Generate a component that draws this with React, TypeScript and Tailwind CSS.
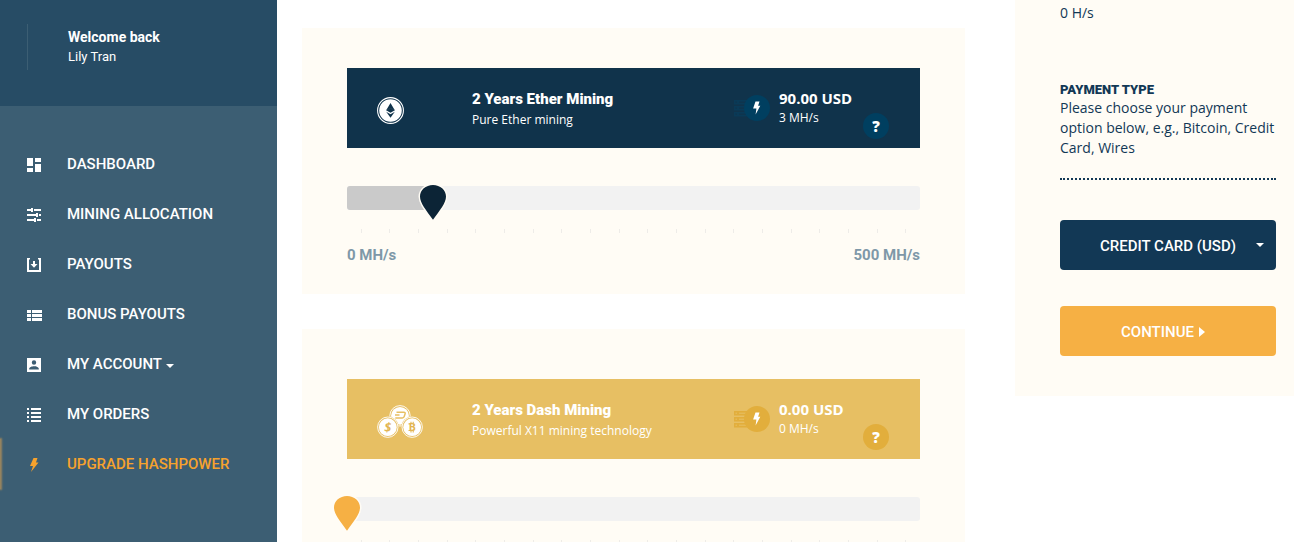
import { useState } from "react";
import type { ReactNode } from "react";

const heading = "font-['Roboto',sans-serif]";

function NavIcon({ name }: { name: string }) {
  const shapes: Record<string, ReactNode> = {
    dashboard: <path d="M0 0h6v8H0zM8 0h6v4H8zM0 10h6v4H0zM8 6h6v8H8z" />,
    tune: (
      <path d="M0 1h4V0h2v4H4V3H0zM7 1h7v2H7zM0 6h9V5h2v4H9V8H0zM12 6h2v2h-2zM0 11h7v-1h2v4H7v-1H0zM10 11h4v2h-4z" />
    ),
    payouts: <path d="M0 0h3v1L2 2v10h10V2l-1-1V0h3v14H0zM6 3h2v3h2.500L7 9.800 3.500 6H6z" />,
    bonus: <path d="M0 2h4v3H0zM5 2h10v3H5zM0 6h4v3H0zM5 6h10v3H5zM0 10h4v3H0zM5 10h10v3H5z" />,
    account: (
      <path
        fillRule="evenodd"
        d="M0 0h14v14H0zM7 2.300a2.200 2.200 0 1 0 0 4.400a2.200 2.200 0 1 0 0-4.400zM2.200 11.600h9.600v-.8C11.800 9 9 8.200 7 8.200S2.200 9 2.200 10.800z"
      />
    ),
    orders: <path d="M0 0h2v2H0zM4 0h10v2H4zM0 4h2v2H0zM4 4h10v2H4zM0 8h2v2H0zM4 8h10v2H4zM0 12h2v2H0zM4 12h10v2H4z" />,
    bolt: <path d="M6.500 0h4L9 4.500h2.500L4 14l2-6H3z" />,
  };
  return (
    <svg aria-hidden="true" viewBox="0 0 15 14" className="mt-[2px] h-[14px] w-[15px] shrink-0 fill-current">
      {shapes[name]}
    </svg>
  );
}

const navItems = [
  { icon: "dashboard", label: "DASHBOARD" },
  { icon: "tune", label: "MINING ALLOCATION" },
  { icon: "payouts", label: "PAYOUTS" },
  { icon: "bonus", label: "BONUS PAYOUTS" },
  { icon: "account", label: "MY ACCOUNT", menu: true },
  { icon: "orders", label: "MY ORDERS" },
  { icon: "bolt", label: "UPGRADE HASHPOWER", active: true },
];

function Caret({ className }: { className: string }) {
  return (
    <svg aria-hidden="true" viewBox="0 0 8 4" className={`h-1 w-2 fill-current ${className}`}>
      <path d="M0 0h8L4 4z" />
    </svg>
  );
}

function Sidebar() {
  return (
    <aside className="w-[277px] shrink-0 bg-[#3c5e73] text-white">
      <div className="h-[106px] bg-[#274c65] pl-[27px] pt-6">
        <div className={`h-[46px] border-l border-[#3c5e73] pl-10 pt-[3px] text-[13px] leading-5 ${heading}`}>
          <p className="text-sm leading-5 font-bold">Welcome back</p>
          <p>Lily Tran</p>
        </div>
      </div>
      <nav className="pt-[33px]">
        {navItems.map((item) => (
          <a
            key={item.label}
            href="#"
            className={`relative flex h-[50px] items-center pl-[27px] text-[15px] font-medium ${heading} ${
              item.active ? "text-[#f6a22d]" : "text-white"
            }`}
          >
            {item.active && (
              <span className="absolute inset-y-0 left-0 w-px bg-[#94835f] shadow-[0_0_2px_1px_#94835f]" />
            )}
            <NavIcon name={item.icon} />
            <span className="ml-[25px]">{item.label}</span>
            {item.menu && <Caret className="ml-1 mt-[3px]" />}
          </a>
        ))}
      </nav>
    </aside>
  );
}

function EtherCoin() {
  return (
    <svg aria-hidden="true" viewBox="0 0 27 27" className="h-[27px] w-[27px]">
      <circle cx="13.5" cy="13.5" r="12.900" fill="none" stroke="#fff" strokeWidth="1.100" />
      <circle cx="13.5" cy="13.5" r="11.300" fill="#fff" />
      <path d="M13.500 6l4.300 7.300-4.300 2.500-4.300-2.500zM9.200 14.800l4.300 2.500 4.300-2.500-4.300 5.900z" fill="#10334b" />
      <path d="M9.200 13.300l4.300-1.900 4.300 1.900" fill="none" stroke="#415c70" strokeWidth=".4" />
    </svg>
  );
}

function Coin({ x, y }: { x: number; y: number }) {
  return (
    <>
      <circle cx={x} cy={y} r="10.800" fill="#e7bf63" />
      <circle cx={x} cy={y} r="10.200" fill="none" stroke="#fff" strokeWidth=".900" />
      <circle cx={x} cy={y} r="8.900" fill="#fff" />
    </>
  );
}

function DashCoins() {
  return (
    <svg aria-hidden="true" viewBox="0 0 46 33" className="h-[33px] w-[46px]">
      <Coin x={23} y={10.8} />
      <path d="M19.500 7.300h7.300q1.800 0 1.300 1.600l-.9 2.700q-.4 1.300-1.900 1.300h-7M18 10h4.500" fill="none" stroke="#e7bf63" strokeWidth="1.500" />
      <Coin x={10.8} y={22.2} />
      <Coin x={35.2} y={22.2} />
      <g fill="#e2b552" fontFamily="Open Sans, sans-serif" fontWeight="700" textAnchor="middle">
        <text x="10.800" y="26.700" fontSize="12.500" fontStyle="italic">$</text>
        <text x="35.400" y="26" fontSize="10.500">B</text>
      </g>
      <path d="M34 16.800v2M36.200 16.800v2M34 25.600v2M36.200 25.600v2M31.500 18.900h2.500M31.500 25.500h2.500" stroke="#e2b552" strokeWidth="1.100" />
    </svg>
  );
}

function HashIcon({ rack, disc, ground }: { rack: string; disc: string; ground: string }) {
  return (
    <svg aria-hidden="true" viewBox="0 0 37 26" className="h-[26px] w-[37px] shrink-0">
      {[5, 11, 17].map((y) => (
        <g key={y}>
          <rect x="1" y={y} width="16" height="4.500" fill={rack} />
          <path d={`M2.500 ${y + 2.2}h1.500M6 ${y + 2.2}h8`} stroke={ground} strokeWidth="1" />
        </g>
      ))}
      <circle cx="24" cy="13" r="13" fill={disc} />
      <path d="M22.500 6.500h4l-1.400 4.300h2.200l-4.700 8.700.8-6h-3.300z" fill="#fff" />
    </svg>
  );
}

type PlanProps = {
  title: string;
  detail: string;
  price: string;
  rate: string;
  start: number;
  dark?: boolean;
};

function Plan({ title, detail, price, rate, start, dark }: PlanProps) {
  const [value, setValue] = useState(start);
  const percent = `${value / 5}%`;
  return (
    <section className={`bg-[#fffcf5] px-[45px] pb-7 ${dark ? "pt-10" : "pt-[50px]"}`}>
      <div className={`flex h-20 pl-[30px] text-white ${dark ? "bg-[#10334b]" : "bg-[#e7bf63]"}`}>
        <div className="flex w-[95px] shrink-0 items-center pt-1">{dark ? <EtherCoin /> : <DashCoins />}</div>
        <div className="min-w-0 flex-1 pt-5">
          <h2 className={`text-[15px] leading-[22px] font-black ${heading}`}>{title}</h2>
          <p className="text-xs leading-5">{detail}</p>
        </div>
        <div className="flex w-[187px] shrink-0">
          <div className="pt-[27px]">
            {dark ? (
              <HashIcon rack="#0a3a57" disc="#003f60" ground="#10334b" />
            ) : (
              <HashIcon rack="#e2ae3c" disc="#e2ae3c" ground="#e7bf63" />
            )}
          </div>
          <div className="ml-[9px] w-[84px] pt-5">
            <p className="text-[15px] leading-5 font-bold">{price}</p>
            <p className="text-xs leading-5">{rate}</p>
          </div>
          <button
            type="button"
            aria-label={`About ${title}`}
            className={`mt-[45px] h-[26px] w-[26px] rounded-full text-[15px] leading-[26px] font-extrabold ${
              dark ? "bg-[#003f60]" : "bg-[#e2ae3c]"
            }`}
          >
            ?
          </button>
        </div>
      </div>
      <div className="relative mt-[38px] h-6 rounded-[3px] bg-[#f2f2f2]">
        <div className="h-6 rounded-l-[3px] bg-[#cacaca]" style={{ width: percent }} />
        <svg
          aria-hidden="true"
          viewBox="0 0 30 38"
          className="absolute -top-[3px] h-[38px] w-[30px] -translate-x-1/2"
          style={{ left: percent }}
        >
          <path
            d="M15 2C7.800 2 2 7 2 13.500C2 20 8 27 15 36.800C22 27 28 20 28 13.500C28 7 22.200 2 15 2z"
            fill={dark ? "#0c2436" : "#f6b044"}
            stroke="#fffcf5"
            strokeWidth="3"
            paintOrder="stroke"
          />
        </svg>
        <input
          type="range"
          min={0}
          max={500}
          value={value}
          aria-label={`${title} hashpower`}
          onChange={(event) => setValue(Number(event.target.value))}
          className="absolute inset-0 h-6 w-full cursor-pointer opacity-0"
        />
      </div>
      <div className="mt-[19px] grid grid-cols-20">
        {Array.from({ length: 20 }, (_, index) => (
          <span key={index} className="h-1 w-px justify-self-center bg-[#eeece8]" />
        ))}
      </div>
      <div className={`mt-3 flex justify-between text-[15px] leading-[21px] font-bold text-[#7e98a8] ${heading}`}>
        <span>0 MH/s</span>
        <span>500 MH/s</span>
      </div>
    </section>
  );
}

function Checkout() {
  return (
    <aside className="ml-[50px] w-[279px] shrink-0 self-start bg-[#fffcf5] pr-[18px] pb-10 pl-[45px] text-sm leading-5 text-[#123855]">
      <p className="pt-[3px]">0 H/s</p>
      <h2 className={`mt-[58px] text-[13px] leading-[17px] font-black ${heading}`}>
        <label htmlFor="payment">PAYMENT TYPE</label>
      </h2>
      <p className="border-b-2 border-dotted border-[#123855] pb-5">
        Please choose your payment option below, e.g., Bitcoin, Credit Card, Wires
      </p>
      <div className="relative mt-10 text-white">
        <select
          id="payment"
          className={`block h-[50px] w-full appearance-none rounded-[4px] bg-[#123855] pt-px text-center text-[15px] font-medium [text-align-last:center] ${heading}`}
        >
          <option>CREDIT CARD (USD)</option>
          <option>BITCOIN</option>
          <option>WIRES</option>
        </select>
        <Caret className="pointer-events-none absolute top-[23px] right-3" />
      </div>
      <button
        type="button"
        className={`mt-9 flex h-[50px] w-full items-center justify-center gap-[5px] rounded-[4px] bg-[#f6b044] pt-px pr-[10px] text-[15px] font-medium text-white ${heading}`}
      >
        CONTINUE
        <svg aria-hidden="true" viewBox="0 0 6 10" className="h-[10px] w-[6px] fill-current">
          <path d="M0 0l6 5-6 5z" />
        </svg>
      </button>
    </aside>
  );
}

export default function App() {
  return (
    <div className="flex min-h-screen bg-white font-['Open_Sans',sans-serif]">
      <Sidebar />
      <main className="flex min-w-0 flex-1 pl-[25px]">
        <div className="min-w-0 flex-1 space-y-[35px] pt-7">
          <Plan title="2 Years Ether Mining" detail="Pure Ether mining" price="90.00 USD" rate="3 MH/s" start={75} dark />
          <Plan title="2 Years Dash Mining" detail="Powerful X11 mining technology" price="0.00 USD" rate="0 MH/s" start={0} />
        </div>
        <Checkout />
      </main>
    </div>
  );
}
